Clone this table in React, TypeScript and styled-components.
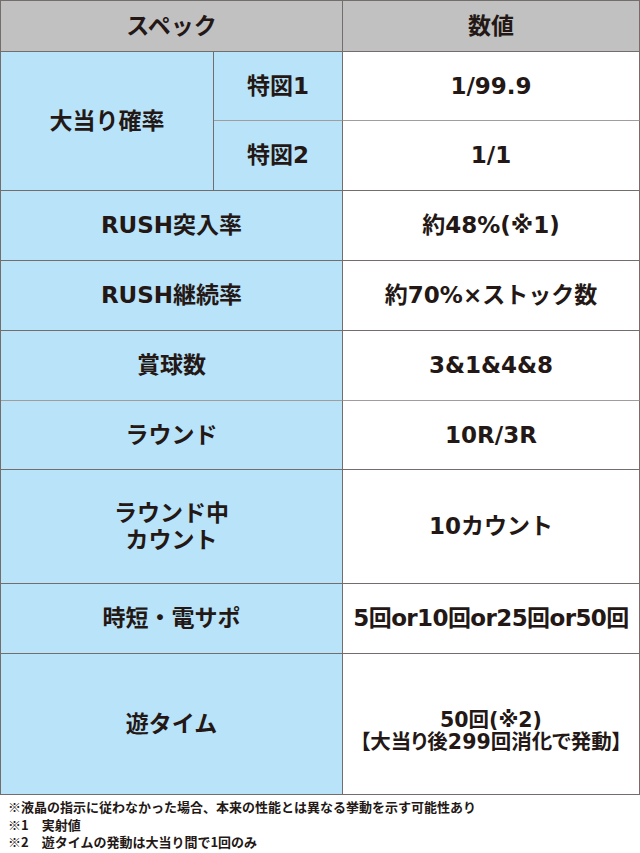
import React from "react";
import styled, { createGlobalStyle } from "styled-components";

const Global = createGlobalStyle`
  html, body { margin: 0; padding: 0; background: #ffffff; }
  body {
    font-family: "DejaVu Sans", "Noto Sans CJK JP", sans-serif;
    color: #231815;
  }
`;

const LINE = "#736d6b";
const SOFT = "#a19d9c";

const Page = styled.div`
  width: 640px;
  height: 853px;
  display: flex;
  flex-direction: column;
`;

const Table = styled.div`
  display: grid;
  grid-template-columns: 213px 129px 297px;
  grid-template-rows: 51px 69px 70px 70px 70px 70px 69px 114px 70px 141px;
  border-top: 1px solid ${LINE};
  border-left: 1px solid ${LINE};
  width: 640px;
  box-sizing: border-box;
`;

type CellProps = {
  $kind: "head" | "label" | "value";
  $col?: string;
  $row?: string;
  $soft?: boolean;
  $lh?: number;
  $size?: number;
  $ls?: number;
  $padTop?: number;
};

const Cell = styled.div<CellProps>`
  box-sizing: border-box;
  display: flex;
  align-items: center;
  justify-content: center;
  text-align: center;
  grid-column: ${(p) => p.$col ?? "auto"};
  grid-row: ${(p) => p.$row ?? "auto"};
  border-right: 1px solid ${LINE};
  border-bottom: 1px solid ${(p) => (p.$soft ? SOFT : LINE)};
  background: ${(p) =>
    p.$kind === "head" ? "#c1c1c1" : p.$kind === "label" ? "#b9e3f8" : "#ffffff"};
  font-weight: 700;
  font-size: ${(p) => p.$size ?? 23}px;
  line-height: ${(p) => p.$lh ?? 27}px;
  letter-spacing: ${(p) => p.$ls ?? 0}px;
  padding-top: ${(p) => p.$padTop ?? 0}px;
  white-space: nowrap;
`;

const Palt = styled.span`
  font-feature-settings: "palt" 1;
`;

const Notes = styled.div`
  padding: 3px 0 0 8px;
  font-family: "Noto Sans CJK JP", sans-serif;
  font-weight: 700;
  font-size: 13px;
  line-height: 17.5px;
`;

const Note = styled.div`
  white-space: nowrap;
`;

type Row = {
  label: React.ReactNode;
  value: React.ReactNode;
  soft?: boolean;
  lh?: number;
  size?: number;
  ls?: number;
  padTop?: number;
};

const rows: Row[] = [
  { label: "RUSH突入率", value: "約48%(※1)" },
  { label: "RUSH継続率", value: "約70%×ストック数" },
  { label: "賞球数", value: "3&1&4&8", soft: true },
  { label: "ラウンド", value: "10R/3R" },
  {
    label: (
      <>
        ラウンド中
        <br />
        カウント
      </>
    ),
    value: "10カウント",
  },
  { label: "時短・電サポ", value: "5回or10回or25回or50回", ls: -0.6 },
  {
    label: "遊タイム",
    value: (
      <Palt>
        50回(※2)
        <br />
        【大当り後299回消化で発動】
      </Palt>
    ),
    lh: 22,
    size: 20.5,
    padTop: 14,
  },
];

export default function App() {
  return (
    <Page>
      <Global />
      <Table>
        <Cell $kind="head" $col="1 / 3">スペック</Cell>
        <Cell $kind="head">数値</Cell>

        <Cell $kind="label" $col="1" $row="2 / 4">大当り確率</Cell>
        <Cell $kind="label" $soft>特図1</Cell>
        <Cell $kind="value" $soft>1/99.9</Cell>
        <Cell $kind="label">特図2</Cell>
        <Cell $kind="value">1/1</Cell>

        {rows.map((r, i) => (
          <React.Fragment key={i}>
            <Cell $kind="label" $col="1 / 3" $soft={r.soft}>
              <div>{r.label}</div>
            </Cell>
            <Cell
              $kind="value"
              $soft={r.soft}
              $lh={r.lh}
              $size={r.size}
              $ls={r.ls}
              $padTop={r.padTop}
            >
              <div>{r.value}</div>
            </Cell>
          </React.Fragment>
        ))}
      </Table>
      <Notes>
        <Note>※液晶の指示に従わなかった場合、本来の性能とは異なる挙動を示す可能性あり</Note>
        <Note>※1　実射値</Note>
        <Note>※2　遊タイムの発動は大当り間で1回のみ</Note>
      </Notes>
    </Page>
  );
}
